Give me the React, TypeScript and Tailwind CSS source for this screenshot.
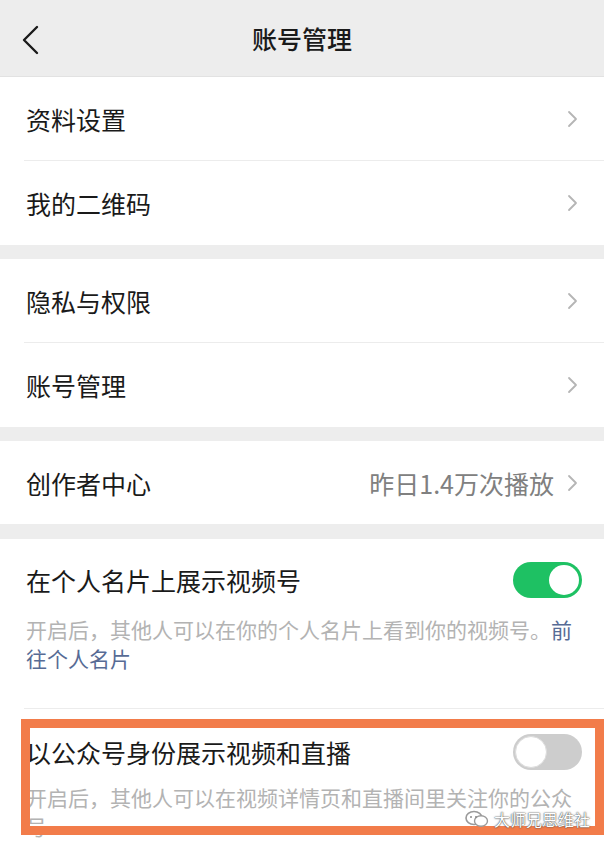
import React from 'react';

const FONT = { fontFamily: '"Noto Sans CJK SC", "Noto Sans", sans-serif' };

// 右箭头
const ChevronRight = () => (
  <svg width="12" height="18" viewBox="0 0 12 18" className="shrink-0">
    <polyline points="2,2 9,9 2,16" fill="none" stroke="#b5b5b5" strokeWidth="1.8" strokeLinecap="round" strokeLinejoin="round" />
  </svg>
);

interface RowProps {
  title: string;
  value?: string;
  height: string;
}

const Row: React.FC<RowProps> = ({ title, value, height }) => (
  <div className={`flex items-center justify-between pl-[26px] pr-[25px] ${height}`}>
    <span className="text-[25px] leading-[34px] text-[#1a1a1a]">{title}</span>
    <div className="flex items-center gap-[13px]">
      {value && <span className="text-[25px] leading-[34px] text-[#808080]">{value}</span>}
      <ChevronRight />
    </div>
  </div>
);

const Divider = () => <div className="ml-[24px] h-px bg-[#ececec]" />;

const Toggle: React.FC<{ on: boolean }> = ({ on }) =>
  on ? (
    <div className="flex h-[36px] w-[69px] shrink-0 items-center justify-end rounded-full bg-[#1ec163] pr-[3px]">
      <div className="h-[30px] w-[30px] rounded-full bg-white" />
    </div>
  ) : (
    <div className="flex h-[36px] w-[69px] shrink-0 items-center rounded-full bg-[#cdcdcd] pl-[2px]">
      <div className="h-[32px] w-[32px] rounded-full border border-[#dcdcdc] bg-white" />
    </div>
  );

// 微信水印小图标
const WeChatMark = () => (
  <svg width="26" height="20" viewBox="0 0 26 20" className="shrink-0">
    <ellipse cx="10" cy="9" rx="8" ry="6.5" fill="none" stroke="#9a9a9a" strokeWidth="1.6" />
    <ellipse cx="17" cy="12" rx="6.5" ry="5.2" fill="#ffffff" stroke="#9a9a9a" strokeWidth="1.4" />
    <circle cx="7" cy="8" r="1" fill="#8a8a8a" />
    <circle cx="12" cy="8" r="1" fill="#8a8a8a" />
  </svg>
);

export default function App() {
  return (
    <div className="relative h-[847px] w-[604px] overflow-hidden bg-[#ededed]" style={FONT}>
      {/* 顶部导航 */}
      <div className="relative flex h-[77px] items-center justify-center border-b border-[#e2e2e2]">
        <svg width="20" height="30" viewBox="0 0 20 30" className="absolute left-[21px] top-[25px]">
          <polyline points="16,2 3,15 16,28" fill="none" stroke="#1a1a1a" strokeWidth="2.4" strokeLinecap="round" strokeLinejoin="round" />
        </svg>
        <span className="text-[25px] font-medium leading-[34px] text-[#1a1a1a]">账号管理</span>
      </div>

      <div className="bg-white">
        <Row title="资料设置" height="h-[83px]" />
        <Divider />
        <Row title="我的二维码" height="h-[84px]" />
      </div>

      <div className="mt-[14px] bg-white">
        <Row title="隐私与权限" height="h-[83px]" />
        <Divider />
        <Row title="账号管理" height="h-[84px]" />
      </div>

      <div className="mt-[14px] bg-white">
        <Row title="创作者中心" value="昨日1.4万次播放" height="h-[83px]" />
      </div>

      <div className="mt-[15px] h-[400px] bg-white">
        <div className="pl-[26px] pr-[22px] pt-[23px] pb-[35px]">
          <div className="flex items-center justify-between">
            <span className="text-[25px] leading-[34px] text-[#1a1a1a]">在个人名片上展示视频号</span>
            <Toggle on />
          </div>
          <p className="mt-[17px] pr-[4px] text-[21px] leading-[29px] text-[#b3b3b3]">
            开启后，其他人可以在你的个人名片上看到你的视频号。
            <span className="text-[#576b95]">前往个人名片</span>
          </p>
        </div>
        <Divider />
        <div className="pl-[26px] pr-[22px] pt-[25px]">
          <div className="flex items-center justify-between">
            <span className="text-[25px] leading-[34px] text-[#1a1a1a]">以公众号身份展示视频和直播</span>
            <Toggle on={false} />
          </div>
          <p className="mt-[13px] pr-[4px] text-[21px] leading-[29px] text-[#b3b3b3]">
            开启后，其他人可以在视频详情页和直播间里关注你的公众号
          </p>
        </div>
      </div>

      {/* 标注框 */}
      <div className="absolute left-[21px] top-[719px] h-[116px] w-[583px] border-[9px] border-[#f27c4a]" />

      {/* 水印 */}
      <div className="absolute left-[464px] top-[808px] flex items-center gap-[4px] whitespace-nowrap">
        <WeChatMark />
        <span
          className="text-[16px] leading-[22px] text-white"
          style={{ textShadow: '0 0 2px #555, 0 0 1px #333' }}
        >
          大师兄思维社
        </span>
      </div>
    </div>
  );
}
